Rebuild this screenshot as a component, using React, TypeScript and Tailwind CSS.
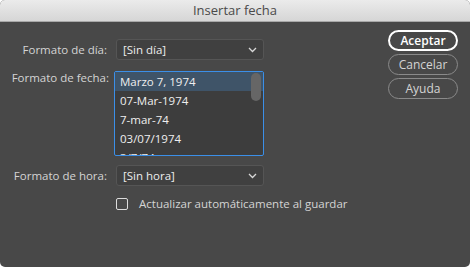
const fechas = ["Marzo 7, 1974", "07-Mar-1974", "7-mar-74", "03/07/1974", "3/7/74"];

function Chevron() {
  return (
    <svg width="9" height="6" viewBox="0 0 9 6" className="text-[#d8d8d8]">
      <path d="M1 1l3.5 3.5L8 1" fill="none" stroke="currentColor" strokeWidth="1.3" />
    </svg>
  );
}

function Select({ value }: { value: string }) {
  return (
    <div className="flex h-[21px] w-[148px] items-center justify-between rounded-[3px] border border-[#555] bg-[#404040] pl-[6px] pr-[6px] text-[#ededed]">
      <span>{value}</span>
      <Chevron />
    </div>
  );
}

export default function App() {
  return (
    <div className="h-[267px] w-[470px] bg-white font-['Open_Sans',sans-serif]">
      <div className="flex h-full flex-col overflow-hidden rounded-[5px] bg-[#484848]">
        {/* title bar */}
        <div className="flex h-[22px] items-center justify-center border-b border-[#a8a8a8] bg-gradient-to-b from-[#ebebeb] to-[#d6d6d6] text-[13px] text-[#4a4a4a]">
          Insertar fecha
        </div>

        <div className="flex flex-1 pt-[8px]">
          {/* form */}
          <div className="flex flex-1 flex-col text-[11.5px] text-[#d4d4d4]">
            <div className="mt-[9px] flex items-center">
              <div className="w-[116px] pr-[9px] text-right">Formato de día:</div>
              <Select value="[Sin día]" />
            </div>

            <div className="mt-[11px] flex items-start">
              <div className="w-[114px] pr-[5px] text-right leading-[14px]">Formato de fecha:</div>
              <div className="relative h-[85px] w-[150px] overflow-hidden rounded-[2px] border border-[#3b8fe8] bg-[#3d3d3d] text-[#efefef]">
                {fechas.map((f, i) => (
                  <div
                    key={f}
                    className={`h-[19px] pl-[5px] leading-[19px] ${i === 0 ? "bg-[#3f5468]" : ""}`}
                  >
                    {f}
                  </div>
                ))}
                <div className="absolute right-[2px] top-[1px] h-[28px] w-[10px] rounded-full bg-[#666]" />
              </div>
            </div>

            <div className="mt-[9px] flex items-center">
              <div className="w-[116px] pr-[9px] text-right">Formato de hora:</div>
              <Select value="[Sin hora]" />
            </div>

            <div className="ml-[116px] mt-[9px] flex items-center gap-[11px]">
              <div className="h-[12px] w-[12px] rounded-[2px] border border-[#dcdcdc]" />
              <span>Actualizar automáticamente al guardar</span>
            </div>
          </div>

          {/* buttons */}
          <div className="flex w-[82px] flex-col gap-[3px] pr-[12px] text-[12px]">
            <div className="flex h-[21px] items-center justify-center rounded-full border-2 border-white font-semibold text-white">
              Aceptar
            </div>
            <div className="flex h-[21px] items-center justify-center rounded-full border border-[#8a8a8a] text-[#d4d4d4]">
              Cancelar
            </div>
            <div className="flex h-[21px] items-center justify-center rounded-full border border-[#8a8a8a] text-[#d4d4d4]">
              Ayuda
            </div>
          </div>
        </div>
      </div>
    </div>
  );
}
